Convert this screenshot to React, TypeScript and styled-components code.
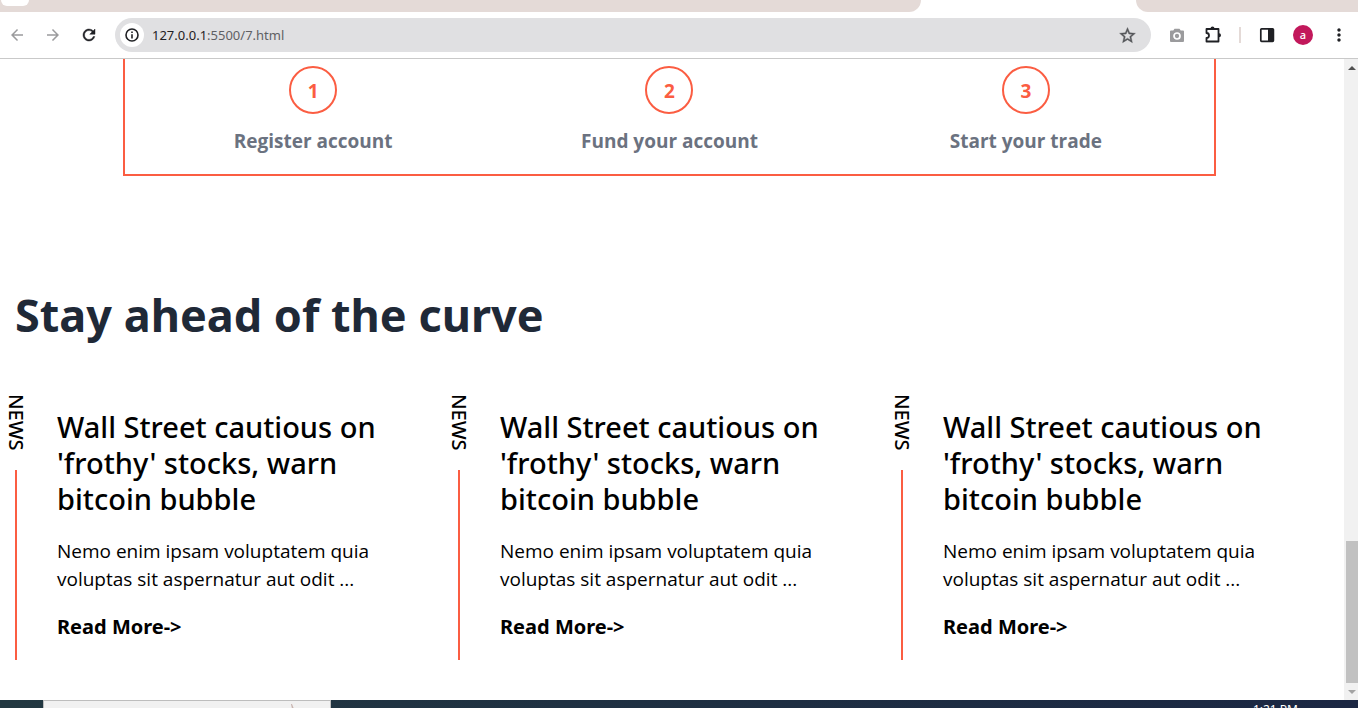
import React from "react";
import styled, { createGlobalStyle } from "styled-components";
import { MdArrowBack, MdArrowForward, MdMoreVert } from "react-icons/md";

const accent = "#fb5d42";
const sans = '"Noto Sans", "Open Sans", sans-serif';
const narrowSans = '"Open Sans", "Noto Sans", sans-serif';

const GlobalStyle = createGlobalStyle`
  * { box-sizing: border-box; }
  body { margin: 0; background: #fff; color: #000; font-family: ${sans}; }
  h2, h3, p, ol { margin: 0; padding: 0; }
  button { border: 0; background: none; padding: 0; font: inherit; color: inherit; cursor: pointer; }
  svg { display: block; }
`;

const Shell = styled.div`
  display: flex;
  flex-direction: column;
  height: 100vh;
  overflow: hidden;
`;

const TabStrip = styled.div`
  display: flex;
  height: 12px;
  background: #fff;
`;

const StripPart = styled.div<{ $grow?: boolean }>`
  flex: ${(p) => (p.$grow ? "1" : "0 0 222px")};
  padding-left: 1px;
  background: #e4dad7;
  border-radius: ${(p) => (p.$grow ? "0 0 12px 0" : "0 0 0 12px")};
`;

const TabSearch = styled.div`
  width: 28px;
  height: 6px;
  background: #fff;
  border-radius: 0 0 10px 10px;
`;

const ActiveTab = styled.div`
  flex: 0 0 215px;
`;

const Toolbar = styled.header`
  display: flex;
  flex: none;
  align-items: center;
  height: 47px;
  padding-right: 1px;
  border-bottom: 1px solid #c9c9c9;
  color: #1f2024;
`;

const IconButton = styled.button<{ $tone?: string }>`
  display: grid;
  place-items: center;
  flex: none;
  width: 36px;
  height: 32px;
  color: ${(p) => p.$tone ?? "#1f2024"};
`;

const NavGroup = styled.nav`
  display: flex;
  margin-right: 8px;
  margin-left: -1px;
`;

const ActionGroup = styled.div`
  display: flex;
  align-items: center;
  margin-left: 8px;
`;

const AddressBar = styled.div`
  display: flex;
  flex: 1;
  align-items: center;
  height: 34px;
  padding: 0 6px 0 5px;
  border-radius: 17px;
  background: #e0e0e2;
`;

const InfoButton = styled.button`
  display: grid;
  place-items: center;
  width: 24px;
  height: 24px;
  border-radius: 50%;
  background: #fff;
`;

const Url = styled.div`
  flex: 1;
  padding-left: 8px;
  color: #5f6064;
  font-size: 13px;
  line-height: 20px;
`;

const Host = styled.span`
  color: #1f2024;
`;

const Divider = styled.span`
  width: 2px;
  height: 16px;
  margin: 0 8px;
  background: #e4dad7;
`;

const Avatar = styled.span`
  display: grid;
  place-items: center;
  width: 20px;
  height: 20px;
  border-radius: 50%;
  background: #c2185b;
  color: #fff;
  font-size: 11px;
  font-weight: 500;
  line-height: 16px;
`;

const Viewport = styled.div`
  display: flex;
  flex: 1;
  min-height: 0;
`;

const Page = styled.main`
  flex: 1;
  overflow: hidden;
`;

const Steps = styled.ol`
  display: grid;
  grid-template-columns: repeat(3, 1fr);
  margin: 0 128px 0 123px;
  padding: 7px 10px 19px;
  border: 2px solid ${accent};
  border-top: 0;
  list-style: none;
`;

const Step = styled.li`
  display: flex;
  flex-direction: column;
  align-items: center;
  gap: 13px;
  color: #6b7280;
  font-family: ${narrowSans};
  font-size: 19px;
  font-weight: 700;
  line-height: 28px;
`;

const StepNumber = styled.span`
  display: grid;
  place-items: center;
  width: 48px;
  height: 48px;
  padding-top: 2px;
  border: 2px solid ${accent};
  border-radius: 50%;
  color: ${accent};
`;

const News = styled.section`
  padding: 115px 0 0 15px;
`;

const Heading = styled.h2`
  color: #1f2937;
  font-size: 45px;
  font-weight: 700;
  line-height: 48px;
`;

const Cards = styled.div`
  display: grid;
  grid-template-columns: repeat(3, 1fr);
  margin-top: 55px;
`;

const Card = styled.article`
  display: flex;
  gap: 27px;
`;

const Rail = styled.div`
  display: flex;
  flex: none;
  flex-direction: column;
  gap: 20px;
  width: 28px;
  margin-left: -13px;
  align-items: center;
`;

const RailLabel = styled.span`
  writing-mode: vertical-rl;
  font-size: 20px;
  font-weight: 500;
  line-height: 28px;
`;

const RailLine = styled.span`
  flex: 1;
  width: 2px;
  background: ${accent};
`;

const CardBody = styled.div`
  width: 340px;
  padding: 15px 0 19px;
`;

const CardTitle = styled.h3`
  font-size: 29px;
  font-weight: 500;
  line-height: 36px;
`;

const Excerpt = styled.p`
  margin: 20px 0;
  font-family: ${narrowSans};
  font-size: 19px;
  font-weight: 400;
  line-height: 28px;
`;

const ReadMore = styled.a`
  display: inline-block;
  color: #000;
  font-size: 20px;
  font-weight: 700;
  line-height: 28px;
  text-decoration: none;
`;

const Scrollbar = styled.div`
  display: flex;
  flex: none;
  flex-direction: column;
  justify-content: space-between;
  align-items: flex-end;
  width: 14px;
  background: #f1f1f1;
`;

const ScrollButton = styled.button`
  display: grid;
  place-items: center;
  width: 12px;
  height: 17px;
`;

const Thumb = styled.div`
  width: 12px;
  height: 142px;
  margin-top: auto;
  background: #c1c1c1;
`;

const Taskbar = styled.footer`
  display: flex;
  flex: none;
  justify-content: space-between;
  height: 8px;
  padding: 0 60px 0 43px;
  overflow: hidden;
  background: linear-gradient(90deg, #223841, #1b2743);
`;

const TaskSearch = styled.div`
  width: 288px;
  padding: 3px 0 0 246px;
  border: 1px solid #bdbdbd;
  border-bottom: 0;
  background: #f1f1f1;
`;

const Clock = styled.time`
  padding-top: 2px;
  color: #fff;
  font-size: 12px;
  line-height: 16px;
`;

const steps = ["Register account", "Fund your account", "Start your trade"];
const articles = [1, 2, 3];

export default function App() {
  return (
    <Shell>
      <GlobalStyle />
      <TabStrip>
        <StripPart $grow><TabSearch /></StripPart>
        <ActiveTab />
        <StripPart />
      </TabStrip>
      <Toolbar>
        <NavGroup>
          <IconButton $tone="#9b9b9d" aria-label="Back"><MdArrowBack size={18} /></IconButton>
          <IconButton $tone="#9b9b9d" aria-label="Forward"><MdArrowForward size={18} /></IconButton>
          <IconButton aria-label="Reload">
            <svg width="18" height="18" viewBox="0 0 24 24">
              <path fill="currentColor" stroke="currentColor" strokeWidth="0.600" d="M17.650 6.350A7.958 7.958 0 0 0 12 4c-4.420 0-7.990 3.580-7.990 8s3.570 8 7.990 8c3.730 0 6.840-2.550 7.730-6h-2.080A5.990 5.990 0 0 1 12 18c-3.310 0-6-2.690-6-6s2.690-6 6-6c1.660 0 3.140.690 4.220 1.780L13 11h7V4l-2.350 2.350z" />
            </svg>
          </IconButton>
        </NavGroup>
        <AddressBar>
          <InfoButton aria-label="Site information">
            <svg width="16" height="16" viewBox="0 0 16 16">
              <circle cx="8" cy="8" r="6" fill="none" stroke="currentColor" strokeWidth="1.600" />
              <path fill="currentColor" d="M7.200 4.500h1.600v1.600H7.200zM7.200 7.200h1.600v4.200H7.200z" />
            </svg>
          </InfoButton>
          <Url><Host>127.0.0.1</Host>:5500/7.html</Url>
          <IconButton $tone="#55565a" aria-label="Bookmark">
            <svg width="19" height="19" viewBox="0 0 24 24">
              <path fill="currentColor" stroke="currentColor" strokeWidth="0.500" d="M22 9.240l-7.190-.620L12 2 9.190 8.630 2 9.240l5.460 4.730L5.820 21 12 17.270 18.180 21l-1.630-7.030L22 9.240zM12 15.400l-3.760 2.270 1-4.280-3.320-2.880 4.380-.380L12 6.100l1.710 4.040 4.380.380-3.320 2.880 1 4.280L12 15.400z" />
            </svg>
          </IconButton>
        </AddressBar>
        <ActionGroup>
          <IconButton aria-label="Screenshot">
            <svg width="16" height="16" viewBox="0 0 16 16">
              <path fill="#9b9b9d" d="M5.500 1.800h5l1.200 1.700H14a1 1 0 0 1 1 1V14a1 1 0 0 1-1 1H2a1 1 0 0 1-1-1V4.500a1 1 0 0 1 1-1h2.300z" />
              <circle cx="8" cy="9" r="3" fill="none" stroke="#fff" strokeWidth="1.700" />
            </svg>
          </IconButton>
          <IconButton aria-label="Extensions">
            <svg width="18" height="18" viewBox="0 0 18 18">
              <path fill="none" stroke="#1f2024" strokeWidth="1.800" strokeLinejoin="round" d="M2.500 3h12v12.500h-12V12a2.400 2.400 0 0 0 0-5z" />
              <path fill="#1f2024" d="M6.500 2.500a2 2 0 0 1 4 0zM15 7.300a2 2 0 0 1 0 4z" />
            </svg>
          </IconButton>
          <Divider />
          <IconButton aria-label="Side panel">
            <svg width="16" height="16" viewBox="0 0 16 16">
              <rect x="1.800" y="1.800" width="12.600" height="12.600" rx="0.800" fill="none" stroke="#1f2024" strokeWidth="1.700" />
              <path fill="#1f2024" d="M9 2h5v12H9z" />
            </svg>
          </IconButton>
          <IconButton aria-label="Profile"><Avatar>a</Avatar></IconButton>
          <IconButton aria-label="Menu"><MdMoreVert size={20} /></IconButton>
        </ActionGroup>
      </Toolbar>
      <Viewport>
        <Page>
          <Steps>
            {steps.map((label, i) => (
              <Step key={label}><StepNumber>{i + 1}</StepNumber>{label}</Step>
            ))}
          </Steps>
          <News>
            <Heading>Stay ahead of the curve</Heading>
            <Cards>
              {articles.map((id) => (
                <Card key={id}>
                  <Rail><RailLabel>NEWS</RailLabel><RailLine /></Rail>
                  <CardBody>
                    <CardTitle>Wall Street cautious on 'frothy' stocks, warn bitcoin bubble</CardTitle>
                    <Excerpt>Nemo enim ipsam voluptatem quia voluptas sit aspernatur aut odit ...</Excerpt>
                    <ReadMore href="#">Read More-&gt;</ReadMore>
                  </CardBody>
                </Card>
              ))}
            </Cards>
          </News>
        </Page>
        <Scrollbar>
          <ScrollButton aria-label="Scroll up"><svg width="8" height="4" viewBox="0 0 8 4"><path fill="#505050" d="M0 4l4-4 4 4z" /></svg></ScrollButton>
          <Thumb />
          <ScrollButton aria-label="Scroll down"><svg width="8" height="4" viewBox="0 0 8 4"><path fill="#a3a3a3" d="M0 0l4 4 4-4z" /></svg></ScrollButton>
        </Scrollbar>
      </Viewport>
      <Taskbar>
        <TaskSearch><svg width="6" height="5" viewBox="0 0 6 5"><path fill="#c9b5b0" d="M1 0h1l2 5H2z" /></svg></TaskSearch>
        <Clock>1:21 PM</Clock>
      </Taskbar>
    </Shell>
  );
}
